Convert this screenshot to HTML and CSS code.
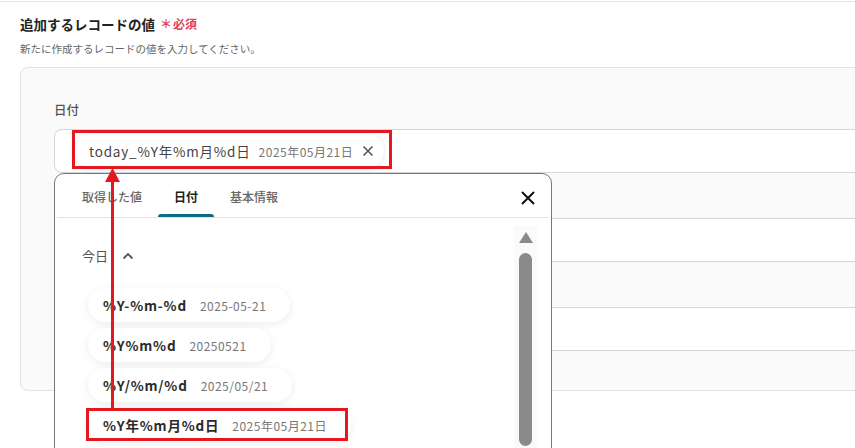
FILE: index.html
```html
<!DOCTYPE html>
<html lang="ja">
<head>
<meta charset="utf-8">
<title>追加するレコードの値</title>
<link rel="stylesheet" href="styles.css">
</head>
<body>
<div class="topline"></div>
<section class="section">
  <h2 class="title">追加するレコードの値<span class="req"><span class="star">＊</span>必須</span></h2>
  <p class="desc">新たに作成するレコードの値を入力してください。</p>
  <div class="panel">
    <div class="field">
      <div class="label">日付</div>
      <div class="input">
        <span class="tag">
          <span class="tag-key">today_%Y年%m月%d日</span>
          <span class="tag-val">2025年05月21日</span>
          <svg class="tag-x" viewBox="0 0 12 12" width="12" height="12"><path d="M1.5 1.5 L10.5 10.5 M10.5 1.5 L1.5 10.5"/></svg>
        </span>
      </div>
    </div>
    <div class="field"><div class="label"></div><div class="input"></div></div>
    <div class="field"><div class="label"></div><div class="input"></div></div>
  </div>
</section>

<div class="popup">
  <div class="tabs">
    <div class="tab">取得した値</div>
    <div class="tab active">日付</div>
    <div class="tab">基本情報</div>
    <svg class="close" viewBox="0 0 16 16" width="16" height="16"><path d="M2 2 L14 14 M14 2 L2 14"/></svg>
  </div>
  <div class="body">
    <div class="content">
      <div class="group">今日<svg class="chev" viewBox="0 0 12 8" width="12" height="8"><path d="M1.5 6.5 L6 2 L10.5 6.5"/></svg></div>
      <div class="chips">
        <div class="chip"><span class="chip-key">%Y-%m-%d</span><span class="chip-val">2025-05-21</span></div>
        <div class="chip"><span class="chip-key">%Y%m%d</span><span class="chip-val">20250521</span></div>
        <div class="chip"><span class="chip-key">%Y/%m/%d</span><span class="chip-val">2025/05/21</span></div>
        <div class="chip"><span class="chip-key">%Y年%m月%d日</span><span class="chip-val">2025年05月21日</span></div>
      </div>
    </div>
    <div class="scroll">
      <div class="scroll-up"></div>
      <div class="scroll-thumb"></div>
    </div>
  </div>
</div>

<svg class="annot" viewBox="0 0 855 448" width="855" height="448">
  <rect x="73.5" y="131.5" width="317" height="36"/>
  <rect x="87.5" y="409.5" width="259" height="30"/>
  <line x1="112.5" y1="180" x2="112.5" y2="409"/>
  <polygon points="112.5,168 105,182 120,182"/>
</svg>
</body>
</html>
```

FILE: styles.css
```css
html, body {
  margin: 0;
  padding: 0;
  overflow: hidden;
  background: #ffffff;
}
body {
  position: relative;
  width: 855px;
  height: 448px;
  font-family: "Noto Sans CJK JP", "Noto Sans", sans-serif;
  color: #333;
}
.topline {
  margin-top: 1px;
  height: 1px;
  background: #e6e6e6;
}
.section {
  padding-left: 20px;
}
.title {
  margin: 12px 0 0;
  font-size: 13.5px;
  line-height: 20px;
  font-weight: 700;
  color: #222;
  display: flex;
  align-items: center;
}
.req {
  margin-left: 5px;
  color: #e8405a;
  font-size: 12px;
  font-weight: 700;
  display: flex;
  align-items: center;
}
.star {
  font-size: 12px;
  margin-right: 1px;
}
.desc {
  margin: 7px 0 0;
  font-size: 10.5px;
  line-height: 16px;
  color: #666;
}
.panel {
  margin-top: 10px;
  width: 900px;
  box-sizing: border-box;
  border: 1px solid #e2e2e2;
  border-radius: 8px;
  background: #fafafa;
  padding: 32px 0 39px 33px;
  display: flex;
  flex-direction: column;
  gap: 16px;
}
.field {
  display: flex;
  flex-direction: column;
}
.label {
  height: 20px;
  line-height: 20px;
  font-size: 12.5px;
  font-weight: 500;
  color: #555;
  margin-bottom: 9px;
}
.input {
  height: 44px;
  box-sizing: border-box;
  border: 1px solid #d3d7dd;
  border-radius: 8px;
  background: #fff;
  padding: 3px 0 3px 19px;
  display: flex;
  align-items: center;
}
.tag {
  height: 34px;
  box-sizing: border-box;
  border-radius: 17px;
  background: #fff;
  box-shadow: 0 1px 6px rgba(0, 0, 0, 0.10);
  padding: 0 10px 0 15px;
  display: flex;
  align-items: center;
}
.tag-key {
  font-size: 13.5px;
  letter-spacing: 0.06em;
  color: #444;
}
.tag-val {
  margin-left: 8px;
  font-size: 12px;
  letter-spacing: 0.04em;
  color: #777;
}
.tag-x {
  margin-left: 9px;
  fill: none;
  stroke: #555;
  stroke-width: 1.6;
}
.popup {
  position: absolute;
  left: 54px;
  top: 173px;
  width: 498px;
  height: 330px;
  box-sizing: border-box;
  border: 1px solid #767676;
  border-radius: 10px;
  background: #fff;
  display: flex;
  flex-direction: column;
}
.tabs {
  margin: 0 2px;
  padding-left: 9px;
  padding-right: 13px;
  height: 43px;
  border-bottom: 1px solid #e3e3e3;
  display: flex;
  align-items: stretch;
}
.tab {
  position: relative;
  padding: 13px 16px 0;
  font-size: 12px;
  line-height: 20px;
  color: #666;
  font-weight: 500;
}
.tab.active {
  color: #222;
  font-weight: 700;
}
.tab.active::after {
  content: "";
  position: absolute;
  left: 0;
  right: 0;
  bottom: 0;
  height: 3px;
  border-radius: 3px 3px 0 0;
  background: #0e6a80;
}
.close {
  margin-left: auto;
  align-self: center;
  margin-top: 4px;
  fill: none;
  stroke: #111;
  stroke-width: 2;
}
.body {
  flex: 1;
  display: flex;
}
.content {
  flex: 1;
  padding-left: 27px;
  padding-top: 27px;
}
.group {
  height: 22px;
  line-height: 22px;
  font-size: 13px;
  color: #555;
  display: flex;
  align-items: center;
}
.chev {
  margin-left: 14px;
  fill: none;
  stroke: #555;
  stroke-width: 1.8;
}
.chips {
  margin-top: 21px;
  display: flex;
  flex-direction: column;
  align-items: flex-start;
  gap: 6px;
  padding-left: 6px;
}
.chip {
  height: 34px;
  box-sizing: border-box;
  border-radius: 17px;
  background: #fff;
  box-shadow: 0 2px 8px rgba(0, 0, 0, 0.08);
  padding: 0 24px 0 15px;
  display: flex;
  align-items: center;
}
.chip-key {
  font-size: 13.5px;
  font-weight: 700;
  letter-spacing: 0.06em;
  color: #2a2a2a;
}
.chip-val {
  margin-left: 13px;
  font-size: 12px;
  letter-spacing: 0.04em;
  color: #777;
}
.scroll {
  margin-top: 8px;
  margin-right: 14px;
  width: 23px;
  background: #fafafa;
  position: relative;
}
.scroll-up {
  margin: 6px auto 0;
  width: 0;
  height: 0;
  border-left: 7.5px solid transparent;
  border-right: 7.5px solid transparent;
  border-bottom: 11px solid #8a8a8a;
}
.scroll-thumb {
  margin: 10px auto 0;
  width: 13px;
  height: 193px;
  border-radius: 7px;
  background: #8a8a8a;
}
.annot {
  position: absolute;
  left: 0;
  top: 0;
  pointer-events: none;
}
.annot rect {
  fill: none;
  stroke: #e3191f;
  stroke-width: 3;
}
.annot line {
  stroke: #e3191f;
  stroke-width: 3;
}
.annot polygon {
  fill: #e3191f;
}
```
